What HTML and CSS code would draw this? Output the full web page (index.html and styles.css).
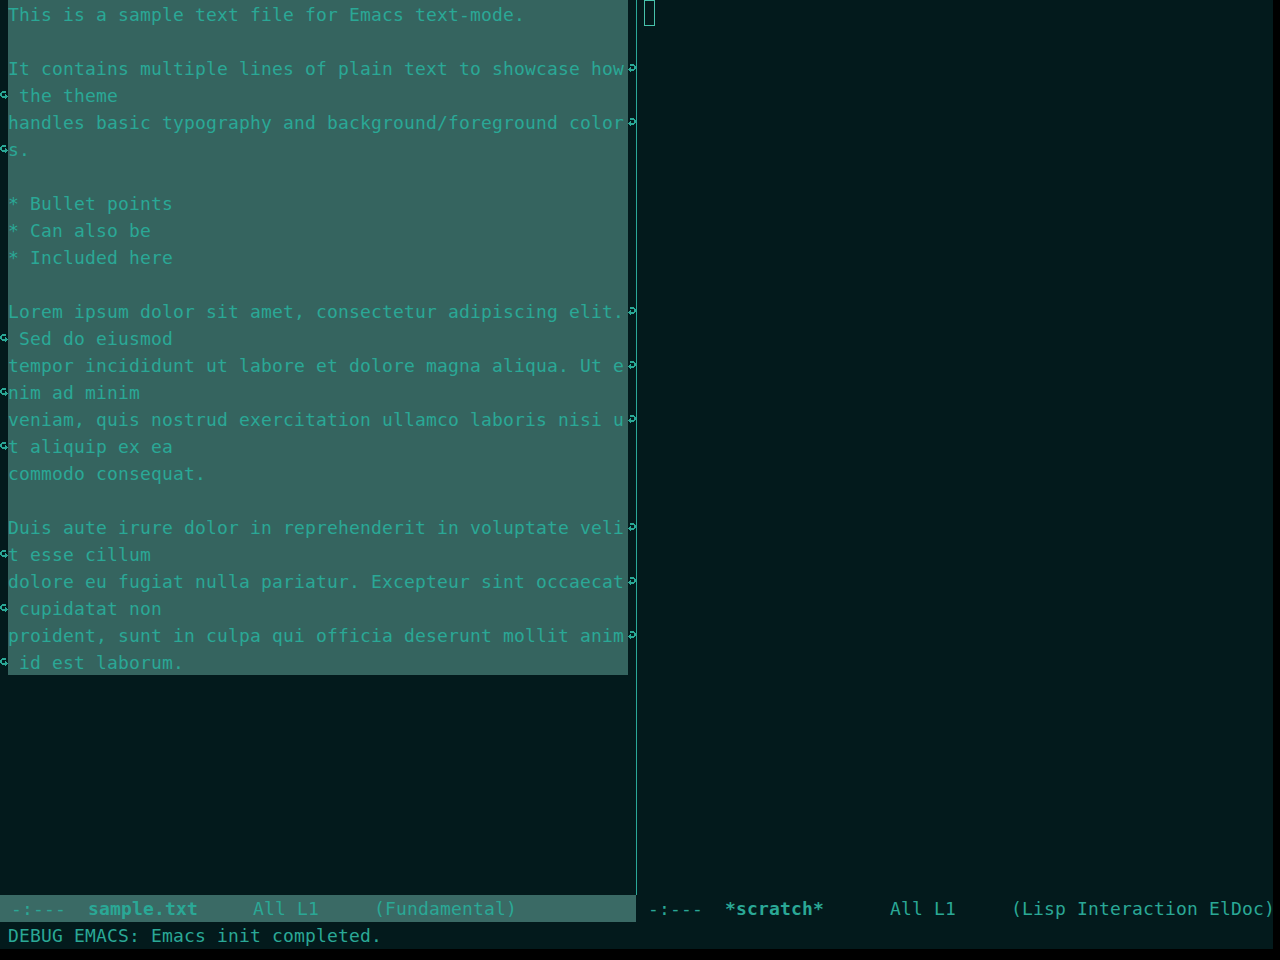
FILE: index.html
```html
<!DOCTYPE html>
<html lang="en">
<head>
  <meta charset="UTF-8" />
  <title>Emacs - sample.txt</title>
  <link rel="stylesheet" href="styles.css">
</head>
<body>
  <svg class="defs" width="0" height="0">
    <symbol id="curl-right" viewBox="0 0 8 8">
      <path d="M2 0h4v1h-4z M2 1h5v1h-5z M6 2h2v1h-2z M2 3h1v1h-1z M6 3h2v1h-2z M1 4h2v1h-2z M6 4h2v1h-2z M0 5h7v1h-7z M1 6h5v1h-5z M2 7h1v1h-1z"/>
    </symbol>
    <symbol id="curl-left" viewBox="0 0 8 8">
      <path d="M2 0h4v1h-4z M1 1h5v1h-5z M0 2h2v1h-2z M0 3h2v1h-2z M5 3h1v1h-1z M0 4h2v1h-2z M5 4h2v1h-2z M1 5h7v1h-7z M2 6h5v1h-5z M5 7h1v1h-1z"/>
    </symbol>
  </svg>

  <div class="frame">
    <div class="windows">
      <!-- left window: sample.txt, whole buffer in the region -->
      <div class="window window-left">
        <div class="body">
          <div class="row sel"><span class="fringe"></span><span class="text">This is a sample text file for Emacs text-mode.</span><span class="fringe"></span></div>
          <div class="row sel"><span class="fringe"></span><span class="text"></span><span class="fringe"></span></div>
          <div class="row sel"><span class="fringe"></span><span class="text">It contains multiple lines of plain text to showcase how</span><span class="fringe"><svg class="arrow"><use href="#curl-right"/></svg></span></div>
          <div class="row sel"><span class="fringe"><svg class="arrow"><use href="#curl-left"/></svg></span><span class="text"> the theme</span><span class="fringe"></span></div>
          <div class="row sel"><span class="fringe"></span><span class="text">handles basic typography and background/foreground color</span><span class="fringe"><svg class="arrow"><use href="#curl-right"/></svg></span></div>
          <div class="row sel"><span class="fringe"><svg class="arrow"><use href="#curl-left"/></svg></span><span class="text">s.</span><span class="fringe"></span></div>
          <div class="row sel"><span class="fringe"></span><span class="text"></span><span class="fringe"></span></div>
          <div class="row sel"><span class="fringe"></span><span class="text">* Bullet points</span><span class="fringe"></span></div>
          <div class="row sel"><span class="fringe"></span><span class="text">* Can also be</span><span class="fringe"></span></div>
          <div class="row sel"><span class="fringe"></span><span class="text">* Included here</span><span class="fringe"></span></div>
          <div class="row sel"><span class="fringe"></span><span class="text"></span><span class="fringe"></span></div>
          <div class="row sel"><span class="fringe"></span><span class="text">Lorem ipsum dolor sit amet, consectetur adipiscing elit.</span><span class="fringe"><svg class="arrow"><use href="#curl-right"/></svg></span></div>
          <div class="row sel"><span class="fringe"><svg class="arrow"><use href="#curl-left"/></svg></span><span class="text"> Sed do eiusmod</span><span class="fringe"></span></div>
          <div class="row sel"><span class="fringe"></span><span class="text">tempor incididunt ut labore et dolore magna aliqua. Ut e</span><span class="fringe"><svg class="arrow"><use href="#curl-right"/></svg></span></div>
          <div class="row sel"><span class="fringe"><svg class="arrow"><use href="#curl-left"/></svg></span><span class="text">nim ad minim</span><span class="fringe"></span></div>
          <div class="row sel"><span class="fringe"></span><span class="text">veniam, quis nostrud exercitation ullamco laboris nisi u</span><span class="fringe"><svg class="arrow"><use href="#curl-right"/></svg></span></div>
          <div class="row sel"><span class="fringe"><svg class="arrow"><use href="#curl-left"/></svg></span><span class="text">t aliquip ex ea</span><span class="fringe"></span></div>
          <div class="row sel"><span class="fringe"></span><span class="text">commodo consequat.</span><span class="fringe"></span></div>
          <div class="row sel"><span class="fringe"></span><span class="text"></span><span class="fringe"></span></div>
          <div class="row sel"><span class="fringe"></span><span class="text">Duis aute irure dolor in reprehenderit in voluptate veli</span><span class="fringe"><svg class="arrow"><use href="#curl-right"/></svg></span></div>
          <div class="row sel"><span class="fringe"><svg class="arrow"><use href="#curl-left"/></svg></span><span class="text">t esse cillum</span><span class="fringe"></span></div>
          <div class="row sel"><span class="fringe"></span><span class="text">dolore eu fugiat nulla pariatur. Excepteur sint occaecat</span><span class="fringe"><svg class="arrow"><use href="#curl-right"/></svg></span></div>
          <div class="row sel"><span class="fringe"><svg class="arrow"><use href="#curl-left"/></svg></span><span class="text"> cupidatat non</span><span class="fringe"></span></div>
          <div class="row sel"><span class="fringe"></span><span class="text">proident, sunt in culpa qui officia deserunt mollit anim</span><span class="fringe"><svg class="arrow"><use href="#curl-right"/></svg></span></div>
          <div class="row sel"><span class="fringe"><svg class="arrow"><use href="#curl-left"/></svg></span><span class="text"> id est laborum.</span><span class="fringe"></span></div>
        </div>
        <div class="modeline active"> -:---  <b>sample.txt</b>     All L1     (Fundamental)</div>
      </div>

      <!-- right window: *scratch* -->
      <div class="window window-right">
        <div class="body">
          <div class="row"><span class="cursor"></span></div>
        </div>
        <div class="modeline"> -:---  <b>*scratch*</b>      All L1     (Lisp Interaction ElDoc)</div>
      </div>
    </div>

    <div class="echo">DEBUG EMACS: Emacs init completed.</div>
  </div>
</body>
</html>
```

FILE: styles.css
```css
body {
  margin: 0;
  background-color: #000;
  color: #2aa896;
  font-family: "DejaVu Sans Mono", monospace;
  font-size: 18px;
  letter-spacing: 0.164px;
}

.defs {
  position: absolute;
}

.frame {
  width: 1273px;
  height: 949px;
  background-color: #031a1c;
  display: flex;
  flex-direction: column;
}

.windows {
  display: flex;
  height: 922px;
}

.window {
  display: flex;
  flex-direction: column;
}

.window-left {
  width: 636px;
}

.window-right {
  width: 637px;
}

.body {
  height: 895px;
}

.window-right .body {
  border-left: 1px solid #2aa898;
}

.row {
  display: flex;
  height: 27px;
}

.fringe {
  width: 8px;
  flex: none;
  display: flex;
  align-items: center;
  justify-content: center;
  color: #2aa896;
}

/* text sits one pixel lower in its 27px cell */
.text {
  width: 620px;
  height: 27px;
  box-sizing: border-box;
  padding-top: 1px;
  flex: none;
  white-space: pre;
  line-height: 27px;
  overflow: hidden;
}

.row.sel .text {
  background-color: #35645f;
}

.arrow {
  width: 8px;
  height: 8px;
  fill: currentColor;
  shape-rendering: crispEdges;
}

.cursor {
  width: 11px;
  height: 26px;
  margin-left: 7px;
  box-sizing: border-box;
  border: 1px solid #47c2ab;
}

.modeline {
  height: 27px;
  box-sizing: border-box;
  padding-top: 1px;
  line-height: 26px;
  white-space: pre;
}

.modeline b {
  font-weight: bold;
}

.modeline.active {
  background-color: #3a6a65;
  overflow: hidden;
}

.window-right .modeline {
  padding-left: 1px;
}

.echo {
  height: 27px;
  box-sizing: border-box;
  padding: 1px 0 0 8px;
  line-height: 26px;
  white-space: pre;
}
```
